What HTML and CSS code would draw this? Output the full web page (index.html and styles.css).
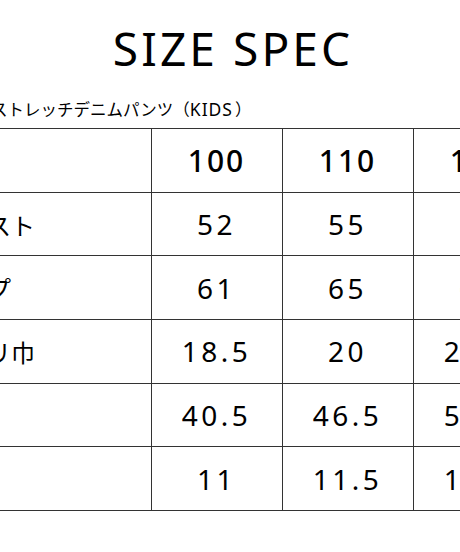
FILE: index.html
```html
<!DOCTYPE html>
<html lang="ja">
<head>
<meta charset="utf-8">
<title>SIZE SPEC</title>
<link rel="stylesheet" href="styles.css">
</head>
<body>
<div class="page">
  <h1 class="title">SIZE SPEC</h1>
  <p class="subtitle">ストレッチデニムパンツ（<span class="latin">KIDS</span>）</p>
  <table class="spec">
    <colgroup>
      <col class="col-label">
      <col class="col-size">
      <col class="col-size">
      <col class="col-size">
      <col class="col-size">
    </colgroup>
    <thead>
      <tr><th class="label"></th><th>100</th><th>110</th><th>120</th><th>130</th></tr>
    </thead>
    <tbody>
      <tr><td class="label">ウエスト</td><td>52</td><td>55</td><td>58</td><td>61</td></tr>
      <tr><td class="label">ヒップ</td><td>61</td><td>65</td><td>69</td><td>73</td></tr>
      <tr><td class="label">ワタリ巾</td><td>18.5</td><td>20</td><td>21.5</td><td>23</td></tr>
      <tr><td class="label">股下</td><td>40.5</td><td>46.5</td><td>52.5</td><td>58.5</td></tr>
      <tr><td class="label">裾巾</td><td>11</td><td>11.5</td><td>12.5</td><td>13</td></tr>
    </tbody>
  </table>
</div>
</body>
</html>
```

FILE: styles.css
```css
html, body {
  margin: 0;
  padding: 0;
  background: #fff;
  overflow: hidden;
}

.page {
  width: 460px;
  color: #000;
  font-family: "Noto Sans", "Noto Sans CJK JP", sans-serif;
}

.title {
  margin: 0;
  padding: 25px 0 0 6px;
  font-size: 46px;
  line-height: 46px;
  font-weight: 400;
  letter-spacing: 3.1px;
  text-align: center;
}

.subtitle {
  margin: 28px 0 0 -9px;
  font-family: "Noto Sans CJK JP", sans-serif;
  font-size: 16.5px;
  line-height: 20px;
  white-space: nowrap;
}

.subtitle .latin {
  font-family: "Noto Sans", sans-serif;
  font-size: 17.5px;
  letter-spacing: 1px;
  padding-right: 2px;
}

.spec {
  margin: 9px 0 0 -80px;
  border-collapse: collapse;
  table-layout: fixed;
  width: 755px;
}

.col-label { width: 230.5px; }
.col-size { width: 131px; }

.spec th,
.spec td {
  height: 62.7px;
  padding: 0;
  border: 1px solid #333;
  text-align: center;
  vertical-align: middle;
  white-space: nowrap;
}

.spec th {
  font-size: 30px;
  font-weight: 500;
  letter-spacing: 2px;
}

.spec td {
  font-size: 28px;
  font-weight: 400;
  letter-spacing: 3.5px;
}

.spec .label {
  text-align: left;
  padding-left: 18px;
  font-family: "Noto Sans CJK JP", sans-serif;
  font-size: 24px;
  letter-spacing: 0;
}
```
